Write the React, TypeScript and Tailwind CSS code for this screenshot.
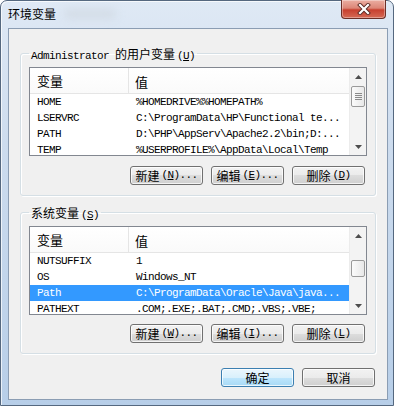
import React from 'react';

const mono = "font-['Liberation_Mono','Noto_Sans_CJK_SC',monospace] text-[11px] tracking-[-0.6px]";
const cjk = "font-['Noto_Sans_CJK_SC',sans-serif] tracking-normal";

function Zh({ children, size = 'text-[12px]' }: { children: React.ReactNode; size?: string }) {
  return <span className={`${cjk} ${size}`}>{children}</span>;
}

type Row = { name: string; value: string; selected?: boolean };

const userVars: Row[] = [
  { name: 'HOME', value: '%HOMEDRIVE%%HOMEPATH%' },
  { name: 'LSERVRC', value: 'C:\\ProgramData\\HP\\Functional te...' },
  { name: 'PATH', value: 'D:\\PHP\\AppServ\\Apache2.2\\bin;D:...' },
  { name: 'TEMP', value: '%USERPROFILE%\\AppData\\Local\\Temp' },
];

const sysVars: Row[] = [
  { name: 'NUTSUFFIX', value: '1' },
  { name: 'OS', value: 'Windows_NT' },
  { name: 'Path', value: 'C:\\ProgramData\\Oracle\\Java\\java...', selected: true },
  { name: 'PATHEXT', value: '.COM;.EXE;.BAT;.CMD;.VBS;.VBE;' },
];

function Arrow({ down }: { down?: boolean }) {
  return (
    <div className="h-[17px] flex items-center justify-center">
      <svg width="7" height="4" viewBox="0 0 7 4">
        {down ? <path d="M0 0h7L3.5 4z" fill="#4d4d4d" /> : <path d="M0 4h7L3.5 0z" fill="#4d4d4d" />}
      </svg>
    </div>
  );
}

function ScrollBar({ thumbTop, thumbH, grip }: { thumbTop: number; thumbH: number; grip?: boolean }) {
  return (
    <div className="w-[17px] flex flex-col bg-[#f3f3f3] border-l border-[#ececec]">
      <Arrow />
      <div className="flex-1 relative">
        <div
          className="absolute left-[1px] right-[1px] rounded-[2px] border border-[#9a9a9a] bg-[linear-gradient(90deg,#fbfbfb,#e8e8e8)] flex flex-col items-center justify-center gap-[1px]"
          style={{ top: thumbTop, height: thumbH }}
        >
          {grip && (
            <>
              <div className="w-[7px] h-[1px] bg-[#8a8a8a]" />
              <div className="w-[7px] h-[1px] bg-[#8a8a8a]" />
              <div className="w-[7px] h-[1px] bg-[#8a8a8a]" />
              <div className="w-[7px] h-[1px] bg-[#8a8a8a]" />
            </>
          )}
        </div>
      </div>
      <Arrow down />
    </div>
  );
}

function VarList({ rows, thumbTop, thumbH, grip }: { rows: Row[]; thumbTop: number; thumbH: number; grip?: boolean }) {
  return (
    <div className="mt-[7px] h-[89px] border border-[#828790] bg-white flex">
      <div className="flex-1 min-w-0 overflow-hidden">
        <div className="h-[26px] flex items-center border-b border-[#e5e5e5] bg-[linear-gradient(#ffffff,#fafafa)]">
          <div className="w-[99px] h-full pl-[7px] flex items-center border-r border-[#e5e5e5]">
            <Zh size="text-[13px]">变量</Zh>
          </div>
          <div className="pl-[6px]">
            <Zh size="text-[13px]">值</Zh>
          </div>
        </div>
        {rows.map((r) => (
          <div
            key={r.name}
            className={`h-[16px] flex items-center whitespace-nowrap ${mono} ${
              r.selected ? 'bg-[#3399ff] text-white' : 'text-black'
            }`}
          >
            <div className="w-[99px] pl-[7px] shrink-0">{r.name}</div>
            <div className="pl-[7px]">{r.value}</div>
          </div>
        ))}
      </div>
      <ScrollBar thumbTop={thumbTop} thumbH={thumbH} grip={grip} />
    </div>
  );
}

function Btn({ zh, k, dots, primary }: { zh: string; k?: string; dots?: boolean; primary?: boolean }) {
  return (
    <button
      className={`w-[73px] h-[19px] rounded-[3px] border flex items-center justify-center leading-none text-black shadow-[inset_0_0_0_1px_rgba(255,255,255,0.75)] ${
        primary
          ? 'border-[#3c7fb1] bg-[linear-gradient(#eaf6fd_0%,#d9f0fc_50%,#bee6fd_50%,#a7d9f5_100%)]'
          : 'border-[#707070] bg-[linear-gradient(#f2f2f2_0%,#ebebeb_50%,#dddddd_50%,#cfcfcf_100%)]'
      }`}
    >
      <Zh>{zh}</Zh>
      {k && (
        <span className={`${mono} ml-[2px]`}>
          (<u>{k}</u>){dots ? '...' : ''}
        </span>
      )}
    </button>
  );
}

function Group({ legend, children }: { legend: React.ReactNode; children: React.ReactNode }) {
  return (
    <fieldset className="mx-[11px] min-w-0 border border-[#d5dfe5] rounded-[3px] px-[8px] pb-[10px] shadow-[inset_1px_1px_0_#ffffff,1px_1px_0_#ffffff]">
      <legend className="px-[2px] h-[14px] leading-[14px] whitespace-nowrap">{legend}</legend>
      {children}
    </fieldset>
  );
}

export default function App() {
  return (
    <div className="w-[394px] h-[406px] bg-white overflow-hidden">
      <div className="w-full h-full flex flex-col rounded-t-[7px] border border-[#55687f] bg-[linear-gradient(180deg,#dfe9f5_0%,#cddcee_35%,#b7cee8_100%)] shadow-[inset_1px_1px_0_rgba(255,255,255,0.7)]">
        {/* Title bar */}
        <div className="h-[27px] flex items-start justify-between pl-[7px] pr-[7px]">
          <div className="flex items-center h-[26px] gap-[8px]">
            <Zh>环境变量</Zh>
            <div className="w-[52px] h-[10px] rounded-full bg-[#d3dce6] blur-[4px]" />
          </div>
          <button className="w-[45px] h-[19px] -mt-[1px] rounded-b-[4px] border border-t-0 border-[#6b2f27] bg-[linear-gradient(#ebaea2_0%,#dc8677_45%,#c7402f_55%,#d56a55_100%)] shadow-[inset_0_0_0_1px_rgba(255,255,255,0.35)] flex items-center justify-center">
            <svg width="14" height="12" viewBox="0 0 14 12">
              <path d="M3 2l8 8M11 2l-8 8" stroke="#5a2a24" strokeWidth="4" strokeLinecap="square" />
              <path d="M3 2l8 8M11 2l-8 8" stroke="#ffffff" strokeWidth="2.2" strokeLinecap="square" />
            </svg>
          </button>
        </div>

        {/* Client area */}
        <div className="ml-[7px] mr-[5px] mb-[5px] flex-1 border border-[#8b9db3] bg-[#f0f0f0] flex flex-col">
          <div className="mt-[17px]">
            <Group
              legend={
                <>
                  <span className={mono}>Administrator&nbsp;</span>
                  <Zh>的用户变量</Zh>
                  <span className={`${mono} ml-[2px]`}>
                    (<u>U</u>)
                  </span>
                </>
              }
            >
              <VarList rows={userVars} thumbTop={1} thumbH={21} grip />
              <div className="mt-[10px] flex justify-end gap-[8px] pr-[2px]">
                <Btn zh="新建" k="N" dots />
                <Btn zh="编辑" k="E" dots />
                <Btn zh="删除" k="D" />
              </div>
            </Group>
          </div>

          <div className="mt-[9px]">
            <Group
              legend={
                <>
                  <Zh>系统变量</Zh>
                  <span className={`${mono} ml-[2px]`}>
                    (<u>S</u>)
                  </span>
                </>
              }
            >
              <VarList rows={sysVars} thumbTop={16} thumbH={17} />
              <div className="mt-[9px] flex justify-end gap-[8px] pr-[2px]">
                <Btn zh="新建" k="W" dots />
                <Btn zh="编辑" k="I" dots />
                <Btn zh="删除" k="L" />
              </div>
            </Group>
          </div>

          <div className="mt-[14px] flex justify-end gap-[8px] pr-[12px]">
            <Btn zh="确定" primary />
            <Btn zh="取消" />
          </div>
        </div>
      </div>
    </div>
  );
}
